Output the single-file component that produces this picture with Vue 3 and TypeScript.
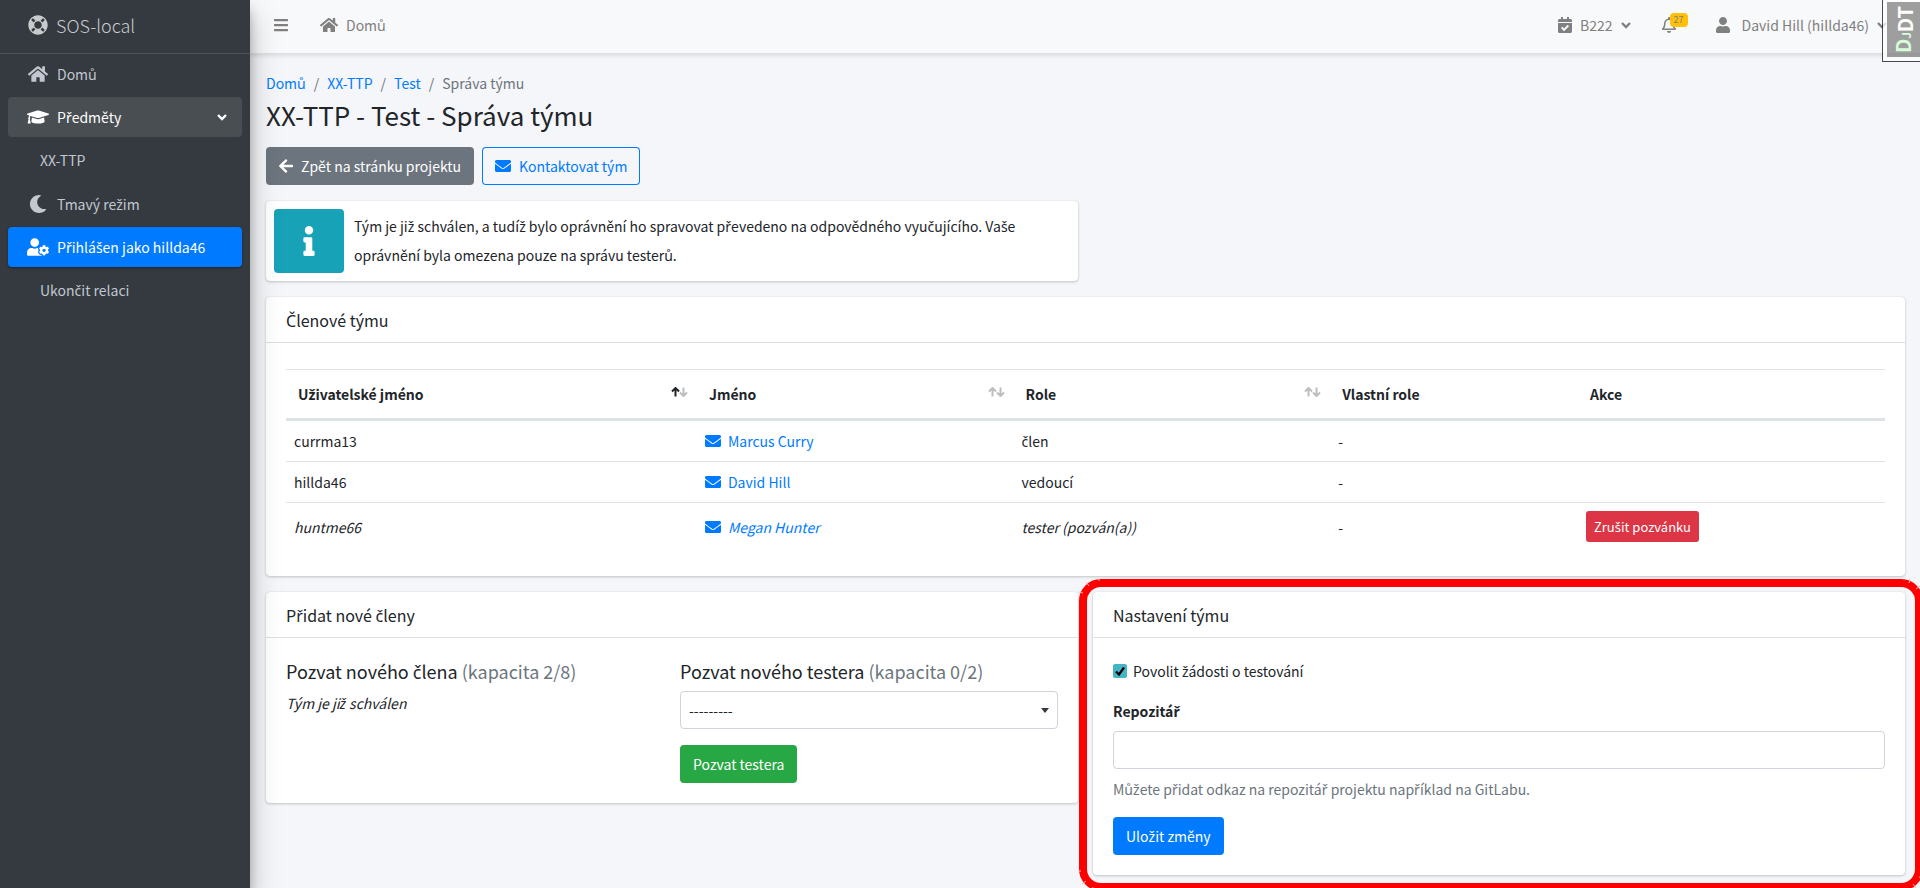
<script setup lang="ts">
import { h, ref } from 'vue'

interface Member {
  login: string
  name: string
  role: string
  custom: string
  invited: boolean
}

const members: Member[] = [
  { login: 'currma13', name: 'Marcus Curry', role: 'člen', custom: '-', invited: false },
  { login: 'hillda46', name: 'David Hill', role: 'vedoucí', custom: '-', invited: false },
  { login: 'huntme66', name: 'Megan Hunter', role: 'tester (pozván(a))', custom: '-', invited: true },
]

const columns = [
  { key: 'login', label: 'Uživatelské jméno', sort: 'asc' },
  { key: 'name', label: 'Jméno', sort: 'both' },
  { key: 'role', label: 'Role', sort: 'both' },
  { key: 'custom', label: 'Vlastní role', sort: '' },
  { key: 'action', label: 'Akce', sort: '' },
]

const allowTesting = ref(true)
const repository = ref('')
const tester = ref('')

const Cz = (props: { t: string }) =>
  h(
    'span',
    props.t
      .split(/([čřšžČŘŠŽ]+)/)
      .filter(Boolean)
      .map((part) => (/[čřšžČŘŠŽ]/.test(part) ? h('span', { class: 'caron' }, part) : part)),
  )
Cz.props = ['t']

const envelope =
  'M502.3 190.8c3.9-3.1 9.7-.2 9.7 4.7V400c0 26.5-21.5 48-48 48H48c-26.5 0-48-21.5-48-48V195.6c0-5 5.7-7.8 9.7-4.7 22.4 17.4 52.1 39.5 154.1 113.6 21.1 15.4 56.7 47.8 92.2 47.6 35.7.3 72-32.8 92.3-47.6 102-74.1 131.6-96.3 154-113.7zM256 320c23.2.4 56.6-29.2 73.4-41.4 132.7-96.3 142.8-104.7 173.4-128.7 5.8-4.5 9.2-11.5 9.2-18.9v-19c0-26.5-21.5-48-48-48H48c-26.5 0-48 21.5-48 48v19c0 7.4 3.4 14.3 9.2 18.9 30.6 23.9 40.7 32.4 173.4 128.7 16.8 12.2 50.2 41.8 73.4 41.4z'
const home =
  'M280.37 148.26L96 300.11V464a16 16 0 0 0 16 16l112.06-.29a16 16 0 0 0 15.92-16V368a16 16 0 0 1 16-16h64a16 16 0 0 1 16 16v95.64a16 16 0 0 0 16 16.05L464 480a16 16 0 0 0 16-16V300L295.67 148.26a12.19 12.19 0 0 0-15.3 0zM571.6 251.47L488 182.56V44.05a12 12 0 0 0-12-12h-56a12 12 0 0 0-12 12v72.61L318.47 43a48 48 0 0 0-61 0L4.34 251.47a12 12 0 0 0-1.6 16.9l25.5 31A12 12 0 0 0 45.15 301l235.22-193.74a12.19 12.19 0 0 1 15.3 0L530.9 301a12 12 0 0 0 16.9-1.6l25.5-31a12 12 0 0 0-1.7-16.93z'
</script>

<template>
  <div class="page">
    <aside class="sidebar">
      <a href="#" class="brand">
        <svg class="brand-icon" viewBox="0 0 512 512" aria-hidden="true"><path d="M256 8C119.033 8 8 119.033 8 256s111.033 248 248 248 248-111.033 248-248S392.967 8 256 8zm173.696 119.559l-63.399 63.399c-10.987-18.559-26.67-34.252-45.255-45.255l63.399-63.399a218.396 218.396 0 0 1 45.255 45.255zM256 352c-53.019 0-96-42.981-96-96s42.981-96 96-96 96 42.981 96 96-42.981 96-96 96zM127.559 82.304l63.399 63.399c-18.559 10.987-34.252 26.67-45.255 45.255l-63.399-63.399a218.372 218.372 0 0 1 45.255-45.255zM82.304 384.441l63.399-63.399c10.987 18.559 26.67 34.252 45.255 45.255l-63.399 63.399a218.396 218.396 0 0 1-45.255-45.255zm302.137 45.255l-63.399-63.399c18.559-10.987 34.252-26.67 45.255-45.255l63.399 63.399a218.403 218.403 0 0 1-45.255 45.255z" /></svg>
        <span>SOS-local</span>
      </a>
      <nav aria-label="Hlavní menu">
        <ul class="menu">
          <li>
            <a href="#" class="menu-link">
              <span class="menu-icon"><svg width="20" height="18" viewBox="0 0 576 512" aria-hidden="true"><path :d="home" /></svg></span>
              Domů
            </a>
          </li>
          <li>
            <a href="#" class="menu-link open">
              <span class="menu-icon"><svg width="22" height="18" viewBox="0 0 640 512" aria-hidden="true"><path d="M622.34 153.2L343.4 67.5c-15.2-4.67-31.6-4.67-46.79 0L17.66 153.2c-23.54 7.23-23.54 38.36 0 45.59l48.63 14.94c-10.67 13.19-17.23 29.28-17.88 46.9C38.78 266.15 32 276.11 32 288c0 10.78 5.68 19.85 13.86 25.65L20.33 428.53C18.11 438.52 25.71 448 35.94 448h56.11c10.24 0 17.84-9.48 15.62-19.47L82.14 313.65C90.32 307.85 96 298.78 96 288c0-11.57-6.47-21.25-15.66-26.87.76-15.02 8.44-28.3 20.69-36.72L296.6 284.5c9.06 2.78 26.44 6.25 46.79 0l278.95-85.7c23.55-7.24 23.55-38.36 0-45.6zM352.79 315.09c-28.53 8.76-52.84 3.92-65.59 0l-145.02-44.55L128 384c0 35.35 85.96 64 192 64s192-28.65 192-64l-14.18-113.47-145.03 44.56z" /></svg></span>
              <Cz t="Předměty" />
              <svg class="chevron push" viewBox="0 0 10 7" aria-hidden="true"><path d="M1 1l4 4 4-4" /></svg>
            </a>
            <ul class="submenu">
              <li><a href="#" class="menu-link sub">XX-TTP</a></li>
            </ul>
          </li>
          <li>
            <a href="#" class="menu-link">
              <span class="menu-icon"><svg width="18" height="18" viewBox="0 0 512 512" aria-hidden="true"><path d="M283.211 512c78.962 0 151.079-35.925 198.857-94.792 7.068-8.708-.639-21.43-11.562-19.35-124.203 23.654-238.262-71.576-238.262-196.954 0-72.222 38.662-138.635 101.498-174.394 9.686-5.512 7.25-20.197-3.756-22.23A258.156 258.156 0 0 0 283.211 0c-141.309 0-256 114.511-256 256 0 141.309 114.511 256 256 256z" /></svg></span>
              <Cz t="Tmavý režim" />
            </a>
          </li>
          <li>
            <a href="#" class="menu-link active">
              <span class="menu-icon"><svg width="22" height="18" viewBox="0 0 640 512" aria-hidden="true"><path d="M610.5 373.3c2.6-14.1 2.6-28.5 0-42.6l25.8-14.9c3-1.7 4.3-5.2 3.3-8.5-6.7-21.6-18.2-41.2-33.2-57.4-2.3-2.5-6-3.1-9-1.4l-25.8 14.9c-10.9-9.3-23.4-16.5-36.9-21.3v-29.8c0-3.4-2.4-6.4-5.7-7.1-22.3-5-45-4.8-66.2 0-3.3.7-5.7 3.7-5.7 7.1v29.8c-13.5 4.8-26 12-36.9 21.3l-25.8-14.9c-2.9-1.7-6.7-1.1-9 1.4-15 16.2-26.5 35.8-33.2 57.4-1 3.3.4 6.8 3.3 8.5l25.8 14.9c-2.6 14.1-2.6 28.5 0 42.6l-25.8 14.9c-3 1.7-4.3 5.2-3.3 8.5 6.7 21.6 18.2 41.1 33.2 57.4 2.3 2.5 6 3.1 9 1.4l25.8-14.9c10.9 9.3 23.4 16.5 36.9 21.3v29.8c0 3.4 2.4 6.4 5.7 7.1 22.3 5 45 4.8 66.2 0 3.3-.7 5.7-3.7 5.7-7.1v-29.8c13.5-4.8 26-12 36.9-21.3l25.8 14.9c2.9 1.7 6.7 1.1 9-1.4 15-16.2 26.5-35.8 33.2-57.4 1-3.3-.4-6.8-3.3-8.5l-25.8-14.9zM496 400.5c-26.8 0-48.5-21.8-48.5-48.5s21.8-48.5 48.5-48.5 48.5 21.8 48.5 48.5-21.7 48.5-48.5 48.5zM224 256c70.7 0 128-57.3 128-128S294.7 0 224 0 96 57.3 96 128s57.3 128 128 128zm201.2 226.5c-2.3-1.2-4.6-2.6-6.8-3.9l-7.9 4.6c-6 3.4-12.8 5.3-19.6 5.3-10.9 0-21.4-4.6-28.9-12.6-18.3-19.8-32.3-43.9-40.2-69.6-5.5-17.7 1.9-36.4 17.9-45.7l7.9-4.6c-.1-2.6-.1-5.2 0-7.8l-7.9-4.6c-16-9.2-23.4-28-17.9-45.7.9-2.9 2.2-5.8 3.2-8.7-3.8-.3-7.5-1.2-11.4-1.2h-16.7c-22.2 10.2-46.9 16-72.9 16s-50.6-5.8-72.9-16h-16.7C60.2 288 0 348.2 0 422.4V464c0 26.5 21.5 48 48 48h352c10.1 0 19.5-3.2 27.2-8.5-1.2-3.8-2-7.7-2-11.8v-9.2z" /></svg></span>
              <Cz t="Přihlášen jako hillda46" />
            </a>
            <ul class="submenu">
              <li><a href="#" class="menu-link sub"><Cz t="Ukončit relaci" /></a></li>
            </ul>
          </li>
        </ul>
      </nav>
    </aside>

    <div class="main">
      <header class="topbar">
        <button type="button" class="icon-button" aria-label="Menu">
          <svg width="14" height="16" viewBox="0 0 448 512" aria-hidden="true"><path d="M16 132h416c8.837 0 16-7.163 16-16V76c0-8.837-7.163-16-16-16H16C7.163 60 0 67.163 0 76v40c0 8.837 7.163 16 16 16zm0 160h416c8.837 0 16-7.163 16-16v-40c0-8.837-7.163-16-16-16H16c-8.837 0-16 7.163-16 16v40c0 8.837 7.163 16 16 16zm0 160h416c8.837 0 16-7.163 16-16v-40c0-8.837-7.163-16-16-16H16c-8.837 0-16 7.163-16 16v40c0 8.837 7.163 16 16 16z" /></svg>
        </button>
        <a href="#" class="top-link">
          <svg width="18" height="16" viewBox="0 0 576 512" aria-hidden="true"><path :d="home" /></svg>
          Domů
        </a>
        <div class="top-right">
          <button type="button" class="top-link term">
            <svg width="14" height="16" viewBox="0 0 448 512" aria-hidden="true"><path d="M436 160H12c-6.627 0-12-5.373-12-12v-36c0-26.51 21.49-48 48-48h48V12c0-6.627 5.373-12 12-12h40c6.627 0 12 5.373 12 12v52h128V12c0-6.627 5.373-12 12-12h40c6.627 0 12 5.373 12 12v52h48c26.51 0 48 21.49 48 48v36c0 6.627-5.373 12-12 12zM12 192h424c6.627 0 12 5.373 12 12v260c0 26.51-21.49 48-48 48H48c-26.51 0-48-21.49-48-48V204c0-6.627 5.373-12 12-12zm333.296 95.947l-28.169-28.398c-4.667-4.705-12.265-4.736-16.97-.068L194.12 364.665l-45.98-46.352c-4.667-4.705-12.266-4.736-16.971-.068l-28.397 28.17c-4.705 4.667-4.736 12.265-.068 16.97l82.601 83.269c4.667 4.705 12.265 4.736 16.97.068l142.953-141.805c4.705-4.667 4.736-12.265.068-16.97z" /></svg>
            B222
            <svg class="chevron" viewBox="0 0 10 7" aria-hidden="true"><path d="M1 1l4 4 4-4" /></svg>
          </button>
          <button type="button" class="bell" aria-label="Oznámení">
            <svg width="14" height="16" viewBox="0 0 448 512" aria-hidden="true"><path d="M439.39 362.29c-19.32-20.76-55.47-51.99-55.47-154.29 0-77.7-54.48-139.9-127.94-155.16V32c0-17.67-14.32-32-31.98-32s-31.98 14.33-31.98 32v20.84C118.56 68.1 64.08 130.3 64.08 208c0 102.3-36.15 133.53-55.47 154.29-6 6.45-8.66 14.16-8.61 21.71.11 16.4 12.98 32 32.1 32h383.8c19.12 0 32-15.6 32.1-32 .05-7.55-2.61-15.27-8.61-21.71zM67.53 368c21.22-27.97 44.42-74.33 44.53-159.42 0-.2-.06-.38-.06-.58 0-61.86 50.14-112 112-112s112 50.14 112 112c0 .2-.06.38-.06.58.11 85.1 23.31 131.46 44.53 159.42H67.53zM224 512c35.32 0 63.97-28.65 63.97-64H160.03c0 35.35 28.65 64 63.97 64z" /></svg>
            <span class="badge">27</span>
          </button>
          <button type="button" class="top-link account">
            <svg width="14" height="16" viewBox="0 0 448 512" aria-hidden="true"><path d="M224 256c70.7 0 128-57.3 128-128S294.7 0 224 0 96 57.3 96 128s57.3 128 128 128zm89.6 32h-16.7c-22.2 10.2-46.9 16-72.9 16s-50.6-5.8-72.9-16h-16.7C60.2 288 0 348.2 0 422.4V464c0 26.5 21.5 48 48 48h352c26.5 0 48-21.5 48-48v-41.6c0-74.2-60.2-134.4-134.4-134.4z" /></svg>
            <span>David Hill (hillda46)</span>
            <svg class="chevron" viewBox="0 0 10 7" aria-hidden="true"><path d="M1 1l4 4 4-4" /></svg>
          </button>
        </div>
      </header>

      <main class="content">
        <nav aria-label="Drobečková navigace">
          <ol class="crumbs">
            <li><a href="#">Domů</a></li>
            <li><a href="#">XX-TTP</a></li>
            <li><a href="#">Test</a></li>
            <li aria-current="page">Správa týmu</li>
          </ol>
        </nav>
        <h1>XX-TTP - Test - Správa týmu</h1>

        <div class="actions">
          <a href="#" class="btn secondary">
            <svg width="14" height="16" viewBox="0 0 448 512" aria-hidden="true"><path d="M257.5 445.1l-22.2 22.2c-9.4 9.4-24.6 9.4-33.9 0L7 273c-9.4-9.4-9.4-24.6 0-33.9L201.4 44.7c9.4-9.4 24.6-9.4 33.9 0l22.2 22.2c9.5 9.5 9.3 25-.4 34.3L136.6 216H424c13.3 0 24 10.7 24 24v32c0 13.3-10.7 24-24 24H136.6l120.5 114.8c9.8 9.3 10 24.8.4 34.3z" /></svg>
            Zpět na stránku projektu
          </a>
          <a href="#" class="btn outline">
            <svg width="16" height="16" viewBox="0 0 512 512" aria-hidden="true"><path :d="envelope" /></svg>
            Kontaktovat tým
          </a>
        </div>

        <div class="halves">
          <section class="card notice">
            <div class="notice-icon">
              <svg width="12" height="30" viewBox="0 0 192 512" aria-hidden="true"><path d="M20 424.229h20V279.771H20c-11.046 0-20-8.954-20-20V212c0-11.046 8.954-20 20-20h112c11.046 0 20 8.954 20 20v212.229h20c11.046 0 20 8.954 20 20V492c0 11.046-8.954 20-20 20H20c-11.046 0-20-8.954-20-20v-47.771c0-11.046 8.954-20 20-20zM96 0C56.235 0 24 32.235 24 72s32.235 72 72 72 72-32.235 72-72S135.764 0 96 0z" /></svg>
            </div>
            <p><Cz t="Tým je již schválen, a tudíž bylo oprávnění ho spravovat převedeno na odpovědného vyučujícího. Vaše oprávnění byla omezena pouze na správu testerů." /></p>
          </section>
        </div>

        <section class="card">
          <h2 class="card-header"><Cz t="Členové týmu" /></h2>
          <div class="table-wrap">
            <table>
              <thead>
                <tr>
                  <th v-for="col in columns" :key="col.key" scope="col" :class="'col-' + col.key">
                    <div class="th-inner">
                      <Cz :t="col.label" />
                      <svg v-if="col.sort" :class="['sort', col.sort]" viewBox="0 0 17 10" aria-hidden="true">
                        <path class="up" d="M4.500 9.500V1.500M1 4.500l3.500-3.500 3.500 3.500" />
                        <path class="down" d="M12.500 .5V8.500M9 5.500l3.500 3.500 3.500-3.500" />
                      </svg>
                    </div>
                  </th>
                </tr>
              </thead>
              <tbody>
                <tr v-for="m in members" :key="m.login">
                  <td :class="{ invited: m.invited }">{{ m.login }}</td>
                  <td :class="{ invited: m.invited }">
                    <a href="#" class="mail">
                      <svg width="16" height="16" viewBox="0 0 512 512" aria-hidden="true"><path :d="envelope" /></svg>
                      {{ m.name }}
                    </a>
                  </td>
                  <td :class="{ invited: m.invited }"><Cz :t="m.role" /></td>
                  <td>{{ m.custom }}</td>
                  <td><button v-if="m.invited" type="button" class="btn small danger"><Cz t="Zrušit pozvánku" /></button></td>
                </tr>
              </tbody>
            </table>
          </div>
        </section>

        <div class="halves">
          <section class="card">
            <h2 class="card-header"><Cz t="Přidat nové členy" /></h2>
            <div class="card-body invite">
              <div>
                <h3><Cz t="Pozvat nového člena" />&#32;<small>(kapacita 2/8)</small></h3>
                <p class="closed"><Cz t="Tým je již schválen" /></p>
              </div>
              <form @submit.prevent>
                <h3><label for="tester">Pozvat nového testera <small>(kapacita 0/2)</small></label></h3>
                <div class="select-box">
                  <select id="tester" v-model="tester" class="field">
                    <option value="">---------</option>
                  </select>
                </div>
                <button type="submit" class="btn success">Pozvat testera</button>
              </form>
            </div>
          </section>

          <section class="card settings">
            <h2 class="card-header">Nastavení týmu</h2>
            <form class="card-body" @submit.prevent>
              <div class="check">
                <input id="allow" v-model="allowTesting" type="checkbox" />
                <label for="allow"><Cz t="Povolit žádosti o testování" /></label>
              </div>
              <label class="field-label" for="repo"><Cz t="Repozitář" /></label>
              <input id="repo" v-model="repository" type="text" class="field" aria-describedby="repo-help" />
              <p id="repo-help" class="help"><Cz t="Můžete přidat odkaz na repozitář projektu například na GitLabu." /></p>
              <button type="submit" class="btn primary"><Cz t="Uložit změny" /></button>
            </form>
            <div class="highlight" aria-hidden="true">
              <svg v-for="c in ['tl', 'tr', 'br', 'bl']" :key="c" :class="['seam', c]" viewBox="0 0 24 24">
                <path d="M20 0v2M7 3l3 4M0 13l4 1" />
              </svg>
            </div>
          </section>
        </div>
      </main>
    </div>

    <button type="button" class="debug-handle" aria-label="DjDT">
      <span class="debug-label"><span class="dj">D<small>J</small></span>DT</span>
    </button>
  </div>
</template>

<style>
html,
body {
  height: 100%;
}
#app {
  min-height: 100%;
}
.caron {
  font-family: 'Noto Sans', 'Open Sans', sans-serif;
  line-height: 1;
}
</style>

<style scoped>
.page,
.page * {
  box-sizing: border-box;
}
.page {
  position: relative;
  display: flex;
  min-height: 100vh;
  overflow: hidden;
  background: #f4f6f9;
  color: #212529;
  font: 14px/24px 'Noto Sans CJK SC', 'Noto Sans', sans-serif;
}
.page button,
.page input,
.page select {
  font: inherit;
}
svg {
  flex: none;
  fill: currentColor;
}
ul,
ol {
  margin: 0;
  padding: 0;
  list-style: none;
}
a {
  color: #007bff;
  text-decoration: none;
}
h1,
h2,
h3,
p {
  margin: 0;
  font-weight: 400;
}

.sidebar {
  z-index: 2;
  flex: none;
  width: 250px;
  background: #343a40;
  box-shadow: 0 14px 28px rgba(0, 0, 0, 0.25), 0 10px 10px rgba(0, 0, 0, 0.22);
}
.brand {
  display: flex;
  align-items: center;
  gap: 8px;
  height: 54px;
  padding: 0 28px 4px;
  border-bottom: 1px solid #4b545c;
  color: #c8cacc;
  font-size: 18px;
  font-weight: 300;
}
.brand-icon {
  width: 20px;
  height: 20px;
}
.menu > li {
  margin-bottom: 3px;
}
.menu-link {
  display: flex;
  align-items: center;
  height: 40px;
  margin: 0 8px;
  padding: 0 15px;
  border-radius: 4px;
  color: #c2c7d0;
}
.menu-icon {
  display: flex;
  justify-content: center;
  width: 29px;
  margin-right: 5px;
}
.menu-link.open {
  background: #494e52;
  color: #fff;
}
.menu-link.active {
  background: #007bff;
  color: #fff;
  box-shadow: 0 1px 3px rgba(0, 0, 0, 0.12), 0 1px 2px rgba(0, 0, 0, 0.24);
}
.menu-link.sub {
  padding-left: 32px;
}
.submenu {
  padding: 3px 0 1px;
}
.chevron {
  width: 10px;
  height: 7px;
  fill: none;
  stroke: currentColor;
  stroke-width: 2.4;
}
.push {
  margin-left: auto;
}

.main {
  flex: 1;
  min-width: 0;
}
.topbar {
  display: flex;
  align-items: center;
  height: 54px;
  padding: 0 33px 3px 24px;
  border-bottom: 1px solid #dee2e6;
  background: #f8f9fa;
  box-shadow: 0 2px 4px rgba(0, 0, 0, 0.1);
  color: #808080;
}
.icon-button,
.bell {
  display: flex;
  margin: 0;
  padding: 0;
  border: 0;
  background: none;
  color: inherit;
}
.top-link {
  display: flex;
  align-items: center;
  gap: 8px;
  margin: 0 0 0 32px;
  padding: 0;
  border: 0;
  background: none;
  color: inherit;
}
.top-right {
  display: flex;
  align-items: center;
  gap: 31px;
  margin-left: auto;
}
.term,
.account {
  margin: 0;
}
.account span {
  margin-left: 4px;
}
.bell {
  position: relative;
  margin-right: 9px;
}
.badge {
  position: absolute;
  top: -4px;
  left: 8px;
  padding: 0 4px;
  border-radius: 4px;
  background: #ffc107;
  font-size: 9px;
  line-height: 14px;
}

.content {
  padding: 17px 15px 13px 16px;
}
.crumbs {
  display: flex;
  color: #6c757d;
}
.crumbs li + li::before {
  content: '/';
  padding: 0 8px;
}
h1 {
  margin-top: 3px;
  font-size: 26px;
  line-height: 34px;
}
.actions {
  display: flex;
  gap: 8px;
  margin: 15px 0 16px;
}
.btn {
  display: inline-flex;
  align-items: center;
  gap: 8px;
  height: 38px;
  padding: 0 13px;
  border: 0;
  border-radius: 4px;
  color: #fff;
}
.actions .btn {
  padding: 0 13px;
}
.secondary {
  background: #6c757d;
}
.outline {
  box-shadow: inset 0 0 0 1px #007bff;
  color: #007bff;
}
.primary {
  background: #007bff;
}
.success {
  background: #28a745;
}
.danger {
  background: #dc3545;
}
.page .small {
  height: 31px;
  padding: 0 8px;
  border-radius: 3px;
  font-size: 13px;
}

.halves {
  display: grid;
  grid-template-columns: 1fr 1fr;
  gap: 15px;
  align-items: start;
}
.card {
  margin-bottom: 16px;
  border-radius: 4px;
  background: #fff;
  box-shadow: 0 0 1px rgba(0, 0, 0, 0.13), 0 1px 3px rgba(0, 0, 0, 0.2);
}
.notice {
  display: flex;
  gap: 10px;
  padding: 8px;
}
.notice-icon {
  display: flex;
  flex: none;
  align-items: center;
  justify-content: center;
  width: 70px;
  min-height: 64px;
  border-radius: 4px;
  background: #17a2b8;
  color: #fff;
}
.notice p {
  padding: 3px 0;
  line-height: 29px;
}
.card-header {
  padding: 11px 20px 10px;
  border-bottom: 1px solid #dfdfdf;
  font-size: 16px;
  line-height: 24px;
}
.card-body {
  padding: 21px 20px 20px;
}

.table-wrap {
  padding: 26px 20px;
}
table {
  width: 100%;
  border-collapse: separate;
  border-spacing: 0;
  table-layout: fixed;
}
th {
  height: 52px;
  padding: 0 9px 0 12px;
  border-top: 1px solid #dee2e6;
  border-bottom: 3px solid #dee2e6;
  text-align: left;
}
.th-inner {
  display: flex;
  justify-content: space-between;
}
td {
  padding: 8px;
  border-top: 1px solid #dee2e6;
}
tbody tr:first-child td {
  border-top: 0;
}
.col-login {
  width: 25.7%;
}
.col-name,
.col-role {
  width: 19.8%;
}
.col-custom {
  width: 15.5%;
}
.sort {
  width: 17px;
  height: 10px;
  margin-top: 5px;
  fill: none;
  stroke: #bcbdbe;
  stroke-width: 2;
}
.sort.asc .up {
  stroke: #212529;
}
.invited {
  font-style: italic;
}
.mail {
  display: flex;
  align-items: center;
  gap: 7px;
}
td .btn {
  display: flex;
}

.invite {
  display: grid;
  grid-template-columns: 1fr 1fr;
  gap: 16px;
}
h3 {
  font-size: 18px;
  line-height: 24px;
}
h3 small {
  color: #6c757d;
  font-size: inherit;
}
.closed {
  margin-top: 8px;
  font-style: italic;
}
.field {
  display: block;
  width: 100%;
  height: 38px;
  padding: 0 8px;
  border: 1px solid #ced4da;
  border-radius: 4px;
  background: #fff;
  color: inherit;
}
.select-box {
  position: relative;
  margin: 8px 0 16px;
}
.select-box select {
  appearance: none;
}
.select-box::after {
  position: absolute;
  top: 17px;
  right: 9px;
  border: 4px solid transparent;
  border-top: 5px solid #343a40;
  border-bottom: 0;
  content: '';
  pointer-events: none;
}

.settings {
  position: relative;
  margin-bottom: 0;
}
.check {
  display: flex;
  align-items: center;
  gap: 6px;
}
.check input {
  width: 14px;
  height: 14px;
  margin: 0;
  border: 1px solid #43b5c5;
  border-radius: 2px;
  appearance: none;
}
.check input:checked {
  border: 0;
  background: #43b5c5 url("data:image/svg+xml,%3Csvg xmlns='http://www.w3.org/2000/svg' viewBox='0 0 14 14'%3E%3Cpath d='M3 7.500l3 3 5-7' fill='none' stroke='%23000' stroke-width='2.200'/%3E%3C/svg%3E");
}
.field-label {
  display: block;
  margin: 16px 0 8px;
  font-weight: 700;
}
.help {
  margin: 8px 0 16px;
  color: #6c757d;
}

/* Frame that draws attention to the team settings */
.highlight {
  position: absolute;
  inset: -13px -18px -16px -14px;
  border: 8px solid #f00;
  border-radius: 22px;
  pointer-events: none;
}
.seam {
  position: absolute;
  width: 24px;
  height: 24px;
  fill: none;
  stroke: #ffb0b0;
  stroke-width: 1;
}
.tl {
  top: -8px;
  left: -8px;
}
.tr {
  top: -8px;
  right: -8px;
  transform: rotate(90deg);
}
.br {
  right: -8px;
  bottom: -8px;
  transform: rotate(180deg);
}
.bl {
  bottom: -8px;
  left: -8px;
  transform: rotate(270deg);
}

.debug-handle {
  position: absolute;
  z-index: 3;
  top: 0;
  right: 0;
  width: 38px;
  height: 62px;
  padding: 2px 0 4px 4px;
  border: 1px solid #111;
  border-width: 0 0 1px 1px;
  background: #fff;
  opacity: 0.75;
}
.debug-label {
  display: flex;
  align-items: center;
  justify-content: center;
  height: 100%;
  background: #808080;
  color: #fff;
  font-size: 20px;
  font-weight: 700;
  line-height: 32px;
  writing-mode: sideways-lr;
}
.dj {
  color: #cfc;
}
.dj small {
  font-size: 12px;
}
</style>
